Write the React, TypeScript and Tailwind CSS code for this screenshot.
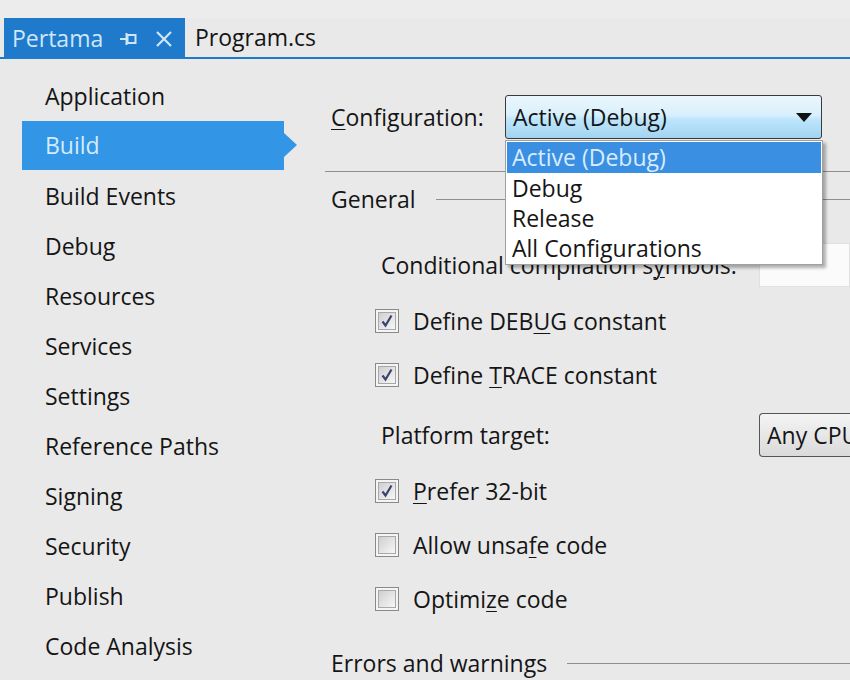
import React from "react";

const navItems = [
  "Application",
  "Build",
  "Build Events",
  "Debug",
  "Resources",
  "Services",
  "Settings",
  "Reference Paths",
  "Signing",
  "Security",
  "Publish",
  "Code Analysis",
];

function CheckBox({ checked }: { checked: boolean }) {
  return (
    <div className="w-[24px] h-[24px] border border-[#8a8a8a] bg-[#f4f4f4] p-[2px] shrink-0">
      <div className="w-full h-full border border-[#a8a8a8] bg-[linear-gradient(135deg,#cfcfcf,#f7f7f7)] flex items-center justify-center">
        {checked && (
          <svg width="14" height="14" viewBox="0 0 14 14">
            <path d="M2.5 7.5 L5.5 11.5 L11.5 1.5" fill="none" stroke="#3b4370" strokeWidth="2.2" />
          </svg>
        )}
      </div>
    </div>
  );
}

function CheckRow({
  checked,
  before,
  u,
  after,
  className,
}: {
  checked: boolean;
  before: string;
  u: string;
  after: string;
  className: string;
}) {
  return (
    <div className={"flex items-center h-[48px] pl-[50px] " + className}>
      <CheckBox checked={checked} />
      <span className="ml-[14px]">
        {before}
        <span className="underline underline-offset-[3px] decoration-1">{u}</span>
        {after}
      </span>
    </div>
  );
}

export default function App() {
  return (
    <div
      className="w-[850px] h-[680px] overflow-hidden bg-[#e9e9e9] text-[#151515] text-[23px] leading-none relative"
      style={{ fontFamily: '"Open Sans", "Noto Sans", sans-serif' }}
    >
      <div className="h-[18px] bg-[#ececec]" />
      {/* tab strip */}
      <div className="flex h-[41px]">
        <div className="w-[4px] border-b-2 border-[#1f7acb]" />
        <div className="w-[181px] bg-[#1f7acb] flex items-center pl-[8px] text-[#cfe6f8]">
          <span>Pertama</span>
          <svg className="ml-[17px]" width="18" height="14" viewBox="0 0 18 14">
            <path d="M0 7 H6" stroke="#cfe6f8" strokeWidth="2" />
            <path d="M6.5 1 V13" stroke="#cfe6f8" strokeWidth="2" />
            <rect x="7.5" y="3" width="8" height="8" fill="none" stroke="#cfe6f8" strokeWidth="2" />
          </svg>
          <svg className="ml-[17px]" width="18" height="18" viewBox="0 0 18 18">
            <path d="M2 2 L16 16 M16 2 L2 16" stroke="#cfe6f8" strokeWidth="2.2" />
          </svg>
        </div>
        <div className="flex-1 flex items-center pl-[10px] border-b-2 border-[#1f7acb]">
          <span>Program.cs</span>
        </div>
      </div>

      <div className="flex">
        {/* left nav */}
        <div className="w-[325px] pt-[12px] shrink-0">
          {navItems.map((it) =>
            it === "Build" ? (
              <div key={it} className="h-[50px] flex items-start">
                <div className="relative ml-[22px] w-[262px] h-[49px] bg-[#3395e5] flex items-center pl-[23px] text-[#d4ebfc]">
                  Build
                  <div className="absolute right-[-13px] top-[12px] w-0 h-0 border-y-[12px] border-y-transparent border-l-[13px] border-l-[#3395e5]" />
                </div>
              </div>
            ) : (
              <div key={it} className="h-[50px] flex items-center pl-[45px]">
                {it}
              </div>
            )
          )}
        </div>

        {/* right panel */}
        <div className="flex-1 relative">
          <div className="mt-[36px] h-[44px] flex items-center">
            <span className="w-[180px] pl-[6px]">
              <span className="underline underline-offset-[3px] decoration-1">C</span>onfiguration:
            </span>
            <div className="relative w-[317px] h-[44px] z-10">
              <div className="w-full h-full rounded-[3px] border border-[#3a3a3a] bg-[linear-gradient(to_bottom,#eaf6fd_0%,#d9f0fc_45%,#bee6fd_55%,#a2d3f0_100%)] flex items-center pl-[7px] pr-[9px] justify-between">
                <span>Active (Debug)</span>
                <svg width="16" height="9" viewBox="0 0 16 9">
                  <path d="M0 0 H16 L8 9 Z" fill="#111" />
                </svg>
              </div>
              <div className="absolute left-0 top-[45px] w-[318px] h-[125px] bg-white border border-[#a0a0a0] shadow-[3px_3px_3px_rgba(0,0,0,0.3)] p-[1px]">
                <div className="h-[31px] bg-[#3a8fe3] text-[#d9ecfd] flex items-center pl-[5px]">Active (Debug)</div>
                <div className="h-[30px] flex items-center pl-[5px]">Debug</div>
                <div className="h-[30px] flex items-center pl-[5px]">Release</div>
                <div className="h-[30px] flex items-center pl-[5px]">All Configurations</div>
              </div>
            </div>
          </div>
          <div className="mt-[32px] h-px bg-[#8f8f8f]" />
          <div className="mt-[15px] h-[24px] flex items-center pl-[6px]">
            <span>General</span>
            <div className="flex-1 h-px bg-[#8f8f8f] ml-[20px]" />
          </div>
          <div className="mt-[32px] h-[44px] flex items-center pl-[56px] justify-between">
            <span>
              Conditional compilation s<span className="underline underline-offset-[3px] decoration-1">y</span>mbols:
            </span>
            <div className="w-[91px] h-[44px] bg-[#fbfbfb] border border-[#e0e0e0]" />
          </div>
          <CheckRow checked before="Define DEB" u="U" after="G constant" className="mt-[10px]" />
          <CheckRow checked before="Define " u="T" after="RACE constant" className="mt-[6px]" />
          <div className="mt-[12px] h-[48px] flex items-center pl-[56px] justify-between">
            <span>
              Platform tar<span className="underline underline-offset-[3px] decoration-1">g</span>et:
            </span>
            <div className="w-[91px] h-[44px] rounded-l-[4px] border border-r-0 border-[#555] bg-[linear-gradient(to_bottom,#f4f4f4,#dadada)] flex items-center pl-[7px] whitespace-nowrap overflow-hidden">
              Any CPU
            </div>
          </div>
          <CheckRow checked before="" u="P" after="refer 32-bit" className="mt-[8px]" />
          <CheckRow checked={false} before="Allow unsa" u="f" after="e code" className="mt-[6px]" />
          <CheckRow checked={false} before="Optimi" u="z" after="e code" className="mt-[6px]" />
          <div className="mt-[16px] h-[48px] flex items-center pl-[6px]">
            <span>Errors and warnings</span>
            <div className="flex-1 h-px bg-[#8f8f8f] ml-[20px]" />
          </div>
        </div>
      </div>
    </div>
  );
}
